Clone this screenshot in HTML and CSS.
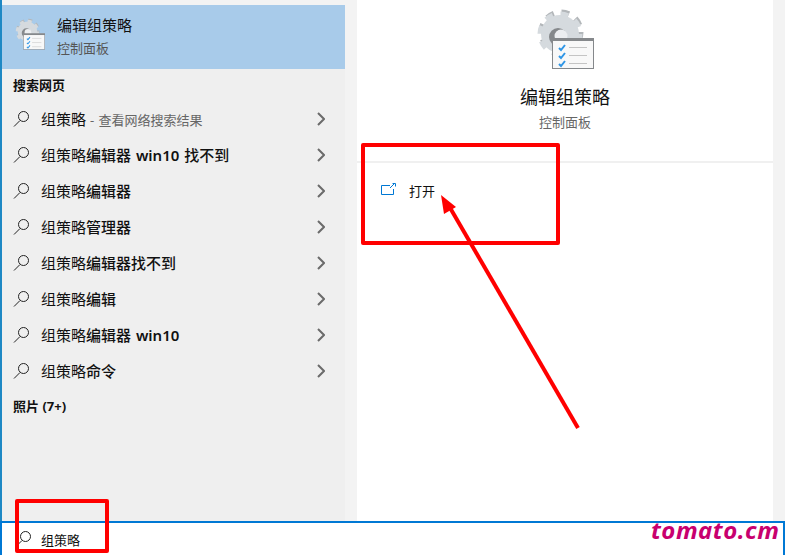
FILE: index.html
```html
<!DOCTYPE html>
<html lang="zh-CN">
<head>
    <meta charset="UTF-8">
    <meta name="viewport" content="width=device-width, initial-scale=1.0">
    <title>编辑组策略</title>
    <link rel="stylesheet" href="styles.css">
</head>
<body>
    <svg class="defs" width="0" height="0">
        <symbol id="gpedit" viewBox="0 0 58 60">
            <circle cx="25" cy="23" r="19.5" fill="none" stroke="#b3b7ba" stroke-width="6" stroke-dasharray="7.6 7.7"/>
            <circle cx="24" cy="25" r="19.5" fill="none" stroke="#d5dade" stroke-width="6" stroke-dasharray="7.6 7.7"/>
            <circle cx="24" cy="25" r="19" fill="#d5dade"/>
            <circle cx="22" cy="28" r="9" fill="#85888b"/>
            <circle cx="25" cy="27" r="6.500" fill="#eceef0"/>
            <rect x="16.5" y="29.5" width="41" height="30" fill="#f8f8f8" stroke="#85888b"/>
            <rect x="16" y="29" width="42" height="3" fill="#85888b"/>
            <path d="M23 39l2 2 4-5M23 47l2 2 4-5M23 55l2 2 4-5" fill="none" stroke="#2f96e6" stroke-width="2"/>
            <path d="M33 38.500h18M33 46.500h18M33 54.500h18" stroke="#c4c4c4"/>
        </symbol>
        <symbol id="search" viewBox="0 0 18 18">
            <circle cx="10.500" cy="6.500" r="5" fill="none" stroke="#222"/>
            <path d="M7 10.500L1 16.500" stroke="#222"/>
        </symbol>
        <symbol id="chevron" viewBox="0 0 8 14">
            <path d="M1 1l6 6-6 6" fill="none" stroke="#6b6b6b" stroke-width="2"/>
        </symbol>
    </svg>

    <div class="window">
        <div class="main">
            <div class="sidebar">
                <div class="best">
                    <svg class="best-icon"><use href="#gpedit"/></svg>
                    <div>
                        <div class="best-title">编辑组策略</div>
                        <div class="best-sub">控制面板</div>
                    </div>
                </div>

                <div class="heading">搜索网页</div>
                <div class="row">
                    <svg class="row-icon"><use href="#search"/></svg>
                    <span class="row-text">组策略<span class="hint">- 查看网络搜索结果</span></span>
                    <svg class="row-arrow"><use href="#chevron"/></svg>
                </div>
                <div class="row">
                    <svg class="row-icon"><use href="#search"/></svg>
                    <span class="row-text">组策略<b>编辑器 <span class="latin">win10</span> 找不到</b></span>
                    <svg class="row-arrow"><use href="#chevron"/></svg>
                </div>
                <div class="row">
                    <svg class="row-icon"><use href="#search"/></svg>
                    <span class="row-text">组策略<b>编辑器</b></span>
                    <svg class="row-arrow"><use href="#chevron"/></svg>
                </div>
                <div class="row">
                    <svg class="row-icon"><use href="#search"/></svg>
                    <span class="row-text">组策略<b>管理器</b></span>
                    <svg class="row-arrow"><use href="#chevron"/></svg>
                </div>
                <div class="row">
                    <svg class="row-icon"><use href="#search"/></svg>
                    <span class="row-text">组策略<b>编辑器找不到</b></span>
                    <svg class="row-arrow"><use href="#chevron"/></svg>
                </div>
                <div class="row">
                    <svg class="row-icon"><use href="#search"/></svg>
                    <span class="row-text">组策略<b>编辑</b></span>
                    <svg class="row-arrow"><use href="#chevron"/></svg>
                </div>
                <div class="row">
                    <svg class="row-icon"><use href="#search"/></svg>
                    <span class="row-text">组策略<b>编辑器 <span class="latin">win10</span></b></span>
                    <svg class="row-arrow"><use href="#chevron"/></svg>
                </div>
                <div class="row">
                    <svg class="row-icon"><use href="#search"/></svg>
                    <span class="row-text">组策略<b>命令</b></span>
                    <svg class="row-arrow"><use href="#chevron"/></svg>
                </div>
                <div class="heading heading-photos">照片 (7+)</div>
            </div>

            <div class="detail">
                <div class="detail-head">
                    <svg class="detail-icon"><use href="#gpedit"/></svg>
                    <div class="detail-title">编辑组策略</div>
                    <div class="detail-sub">控制面板</div>
                </div>
                <div class="action">
                    <svg class="action-icon" viewBox="0 0 16 12">
                        <path d="M9 2.500H.5v9h12V6" fill="none" stroke="#0078d4"/>
                        <path d="M9 5l5-5M11.500.5h3v3" fill="none" stroke="#0078d4"/>
                    </svg>
                    <span>打开</span>
                </div>
            </div>
        </div>

        <div class="searchbar">
            <svg class="search-icon"><use href="#search"/></svg>
            <span>组策略</span>
        </div>
    </div>

    <!-- annotations drawn on top of the screenshot -->
    <div class="mark mark-open"></div>
    <div class="mark mark-search"></div>
    <svg class="pointer" viewBox="0 0 785 555">
        <path d="M578 428L449 206" fill="none" stroke="#f00" stroke-width="4"/>
        <path d="M441 195L456 207 444 214z" fill="#f00"/>
    </svg>
    <div class="watermark">tomato.cm</div>
</body>
</html>
```

FILE: styles.css
```css
html, body {
    margin: 0;
    padding: 0;
}
body {
    font-family: "Noto Sans", "Noto Sans CJK SC", sans-serif;
    color: #111;
    overflow: hidden;
    position: relative;
    width: 785px;
    height: 555px;
}
.defs {
    position: absolute;
}
.window {
    display: flex;
    flex-direction: column;
    height: 555px;
    background: #f3f3f3;
}
.main {
    display: flex;
    height: 521px;
}
.sidebar {
    width: 343px;
    padding-top: 5px;
    background: #efefef;
    border-left: 2px solid #1e88c4;
    box-shadow: 0 5px 0 #f3f3f3 inset;
}
.best {
    display: flex;
    align-items: center;
    height: 64px;
    background: #a8cbea;
}
.best-icon {
    width: 30px;
    height: 32px;
    margin: 0 12px 7px 13px;
}
.best-title {
    margin-top: -2px;
    font-size: 15px;
    line-height: 22px;
}
.best-sub {
    margin-top: 1px;
    font-size: 13px;
    line-height: 22px;
    color: #555;
}
.heading {
    display: flex;
    align-items: center;
    height: 30px;
    padding: 0 0 2px 11px;
    font-size: 13px;
    font-weight: bold;
}
.heading-photos {
    height: 32px;
    padding-bottom: 0;
}
.row {
    display: flex;
    align-items: center;
    height: 36px;
    padding-left: 11px;
}
.row-icon {
    width: 18px;
    height: 18px;
    margin-right: 10px;
}
.row-text {
    flex: 1;
    padding-bottom: 2px;
    font-size: 15px;
    word-spacing: 1px;
}
.row-text b {
    font-weight: 500;
}
.row-text .latin {
    font-weight: 600;
}
.hint {
    margin-left: 4px;
    font-size: 13px;
    color: #666;
}
.row-arrow {
    width: 8px;
    height: 14px;
    margin-right: 20px;
}
.detail {
    width: 416px;
    margin-left: 12px;
    background: #fff;
}
.detail-head {
    display: flex;
    flex-direction: column;
    align-items: center;
    height: 163px;
    padding-top: 9px;
    box-sizing: border-box;
    border-bottom: 2px solid #f0f0f0;
}
.detail-icon {
    width: 58px;
    height: 60px;
}
.detail-title {
    margin-top: 16px;
    font-size: 18px;
    line-height: 24px;
}
.detail-sub {
    margin-top: 3px;
    font-size: 13px;
    line-height: 20px;
    color: #666;
}
.action {
    display: flex;
    align-items: center;
    height: 54px;
    padding-left: 24px;
    font-size: 13px;
}
.action-icon {
    width: 16px;
    height: 12px;
    margin: -2px 12px 0 0;
}
.searchbar {
    display: flex;
    align-items: center;
    height: 32px;
    padding-left: 13px;
    background: #fff;
    border: 2px solid #0078d4;
    border-bottom: none;
    font-size: 13px;
}
.search-icon {
    width: 18px;
    height: 18px;
    margin-right: 8px;
}
.mark {
    position: absolute;
    box-sizing: border-box;
    border: 4px solid #f00;
    border-radius: 2px;
}
.mark-open {
    left: 361px;
    top: 143px;
    width: 199px;
    height: 102px;
}
.mark-search {
    left: 15px;
    top: 499px;
    width: 94px;
    height: 54px;
}
.pointer {
    position: absolute;
    left: 0;
    top: 0;
    width: 785px;
    height: 555px;
}
.watermark {
    position: absolute;
    left: 651px;
    top: 513px;
    font-family: "Open Sans", sans-serif;
    font-size: 24px;
    line-height: 33px;
    font-weight: bold;
    font-style: italic;
    letter-spacing: 0.5px;
    color: #c8006e;
}
```
